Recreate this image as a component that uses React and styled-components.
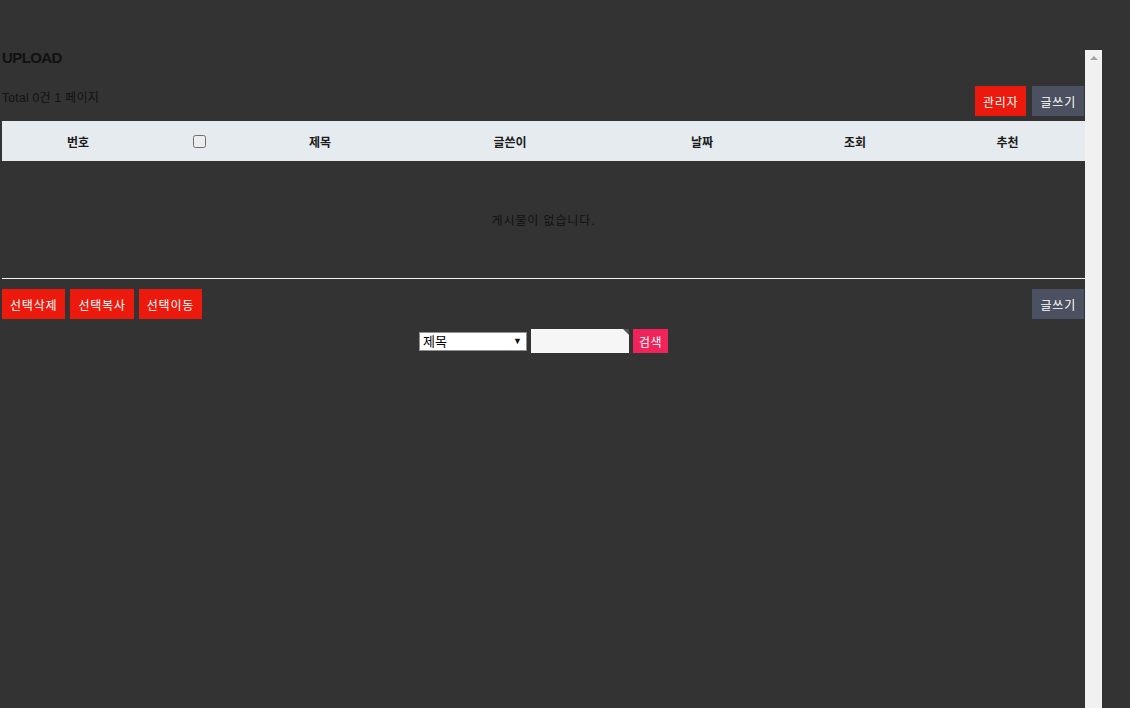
import React from 'react';
import styled, { createGlobalStyle } from 'styled-components';

const GlobalStyle = createGlobalStyle`
  html, body {
    margin: 0;
    padding: 0;
    background: #333333;
  }
  body {
    font-family: "Liberation Sans", "Noto Sans CJK KR", sans-serif;
    font-size: 12px;
    color: #111;
  }
`;

// --- LAYOUT ---

const Page = styled.div`
  display: flex;
  flex-direction: column;
  height: 708px;
  overflow: hidden;
`;

const TopSpace = styled.div`
  height: 50px;
  flex-shrink: 0;
`;

const Frame = styled.div`
  display: flex;
  flex: 1;
`;

const FrameBody = styled.div`
  width: 1083px;
  padding-left: 2px;
`;

const ScrollTrack = styled.div`
  width: 17px;
  background: #f1f1f1;
  display: flex;
  justify-content: center;
  padding-top: 6px;
  box-sizing: border-box;
`;

const ScrollArrow = styled.div`
  width: 0;
  height: 0;
  border-left: 4px solid transparent;
  border-right: 4px solid transparent;
  border-bottom: 4px solid #a3a3a3;
`;

const Title = styled.h2`
  margin: 0;
  font-size: 15px;
  font-weight: bold;
  letter-spacing: -0.6px;
  line-height: 15px;
  color: #111;
`;

const TopBar = styled.div`
  display: flex;
  justify-content: space-between;
  align-items: flex-start;
  margin-top: 21px;
  height: 30px;
`;

const Total = styled.div`
  font-size: 12px;
  line-height: 12px;
  padding-top: 6px;
  letter-spacing: 0.3px;
  color: #111;
`;

const ButtonGroup = styled.div`
  display: flex;
  gap: ${p => p.$gap || 6}px;
  margin-right: ${p => p.$edge || 0}px;
`;

const Btn = styled.button`
  height: 30px;
  padding: 0 ${p => p.$pad || 8}px;
  border: none;
  border-radius: 0;
  font-family: "Liberation Sans", "Noto Sans CJK KR", sans-serif;
  font-size: 12px;
  letter-spacing: 0.8px;
  color: #fff;
  background: ${p => (p.$tone === 'gray' ? '#4b5160' : '#ec1a0d')};
  cursor: pointer;
`;

// --- TABLE ---

const Table = styled.table`
  width: 1083px;
  margin-top: 5px;
  border-collapse: collapse;
  table-layout: fixed;
`;

const HeadCell = styled.th`
  height: 40px;
  padding: 0;
  background: #e5ebee;
  font-size: 12px;
  font-weight: bold;
  color: #1a1a1a;
  text-align: center;
  vertical-align: middle;
`;

const Check = styled.input`
  margin: 0;
  width: 13px;
  height: 13px;
  vertical-align: middle;
  accent-color: #ddd;
  filter: brightness(0.93);
`;

const EmptyCell = styled.td`
  height: 117px;
  text-align: center;
  vertical-align: middle;
  font-size: 12px;
  letter-spacing: 0.9px;
  color: #111;
  border-bottom: 1px solid #f2f2f2;
  padding: 0;
`;

const BottomBar = styled.div`
  display: flex;
  justify-content: space-between;
  margin-top: 10px;
`;

const SearchRow = styled.form`
  display: flex;
  justify-content: center;
  align-items: center;
  gap: 4px;
  margin-top: 10px;
`;

const SelectWrap = styled.div`
  position: relative;
  width: 108px;
  height: 19px;
`;

const Select = styled.select`
  appearance: none;
  width: 100%;
  height: 100%;
  margin: 0;
  padding: 0 0 0 3px;
  border: 1px solid #8f8f8f;
  border-radius: 0;
  background: #fff;
  font-family: "Liberation Sans", "Noto Sans CJK KR", sans-serif;
  font-size: 13px;
  color: #000;
`;

const SelectArrow = styled.span`
  position: absolute;
  right: 5px;
  top: 4px;
  font-size: 9px;
  line-height: 10px;
  color: #111;
  pointer-events: none;
`;

const InputWrap = styled.div`
  position: relative;
  width: 98px;
  height: 24px;

  &::after {
    content: '';
    position: absolute;
    top: 0;
    right: 0;
    width: 0;
    height: 0;
    border-top: 6px solid #555;
    border-left: 6px solid transparent;
  }
`;

const SearchInput = styled.input`
  width: 100%;
  height: 100%;
  box-sizing: border-box;
  margin: 0;
  border: none;
  background: #f6f6f6;
`;

const SearchBtn = styled.button`
  height: 24px;
  width: 35px;
  padding: 0;
  border: none;
  background: #f0245a;
  color: #fff;
  font-family: "Liberation Sans", "Noto Sans CJK KR", sans-serif;
  font-size: 12px;
  letter-spacing: 0.5px;
`;

const columns = [
  { key: 'num', label: '번호', width: 152 },
  { key: 'chk', label: null, width: 90 },
  { key: 'subject', label: '제목', width: 152 },
  { key: 'writer', label: '글쓴이', width: 228 },
  { key: 'date', label: '날짜', width: 156 },
  { key: 'hit', label: '조회', width: 150 },
  { key: 'good', label: '추천', width: 155 },
];

const App = () => (
  <>
    <GlobalStyle />
    <Page>
      <TopSpace />
      <Frame>
        <FrameBody>
          <Title>UPLOAD</Title>

          <TopBar>
            <Total>Total 0건 1 페이지</Total>
            <ButtonGroup $edge={1}>
              <Btn>관리자</Btn>
              <Btn $tone="gray">글쓰기</Btn>
            </ButtonGroup>
          </TopBar>

          <Table>
            <colgroup>
              {columns.map(c => (
                <col key={c.key} style={{ width: c.width }} />
              ))}
            </colgroup>
            <thead>
              <tr>
                {columns.map(c => (
                  <HeadCell key={c.key}>
                    {c.label ?? <Check type="checkbox" />}
                  </HeadCell>
                ))}
              </tr>
            </thead>
            <tbody>
              <tr>
                <EmptyCell colSpan={7}>게시물이 없습니다.</EmptyCell>
              </tr>
            </tbody>
          </Table>

          <BottomBar>
            <ButtonGroup $gap={5}>
              <Btn>선택삭제</Btn>
              <Btn>선택복사</Btn>
              <Btn>선택이동</Btn>
            </ButtonGroup>
            <ButtonGroup $edge={1}>
              <Btn $tone="gray">글쓰기</Btn>
            </ButtonGroup>
          </BottomBar>

          <SearchRow onSubmit={e => e.preventDefault()}>
            <SelectWrap>
              <Select defaultValue="subject">
                <option value="subject">제목</option>
                <option value="content">내용</option>
                <option value="writer">글쓴이</option>
              </Select>
              <SelectArrow>▼</SelectArrow>
            </SelectWrap>
            <InputWrap>
              <SearchInput type="text" />
            </InputWrap>
            <SearchBtn type="submit">검색</SearchBtn>
          </SearchRow>
        </FrameBody>
        <ScrollTrack>
          <ScrollArrow />
        </ScrollTrack>
      </Frame>
    </Page>
  </>
);

export default App;
